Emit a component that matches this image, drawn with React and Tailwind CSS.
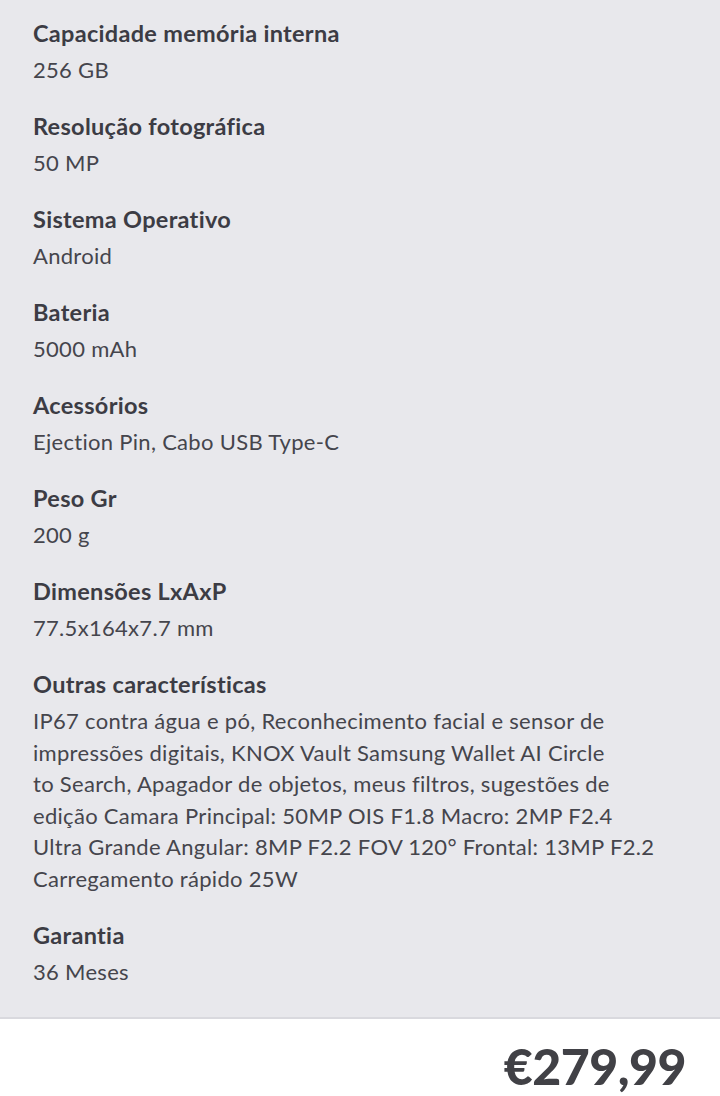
// Product spec sheet — grey list of label/value pairs with a white price footer.
const specs = [
  { label: "Capacidade memória interna", value: "256 GB" },
  { label: "Resolução fotográfica", value: "50 MP" },
  { label: "Sistema Operativo", value: "Android" },
  { label: "Bateria", value: "5000 mAh" },
  { label: "Acessórios", value: "Ejection Pin, Cabo USB Type-C" },
  { label: "Peso Gr", value: "200 g" },
  { label: "Dimensões LxAxP", value: "77.5x164x7.7 mm" },
  {
    label: "Outras características",
    lines: [
      "IP67 contra água e pó, Reconhecimento facial e sensor de",
      "impressões digitais, KNOX Vault Samsung Wallet AI Circle",
      "to Search, Apagador de objetos, meus filtros, sugestões de",
      "edição Camara Principal: 50MP OIS F1.8 Macro: 2MP F2.4",
      "Ultra Grande Angular: 8MP F2.2 FOV 120° Frontal: 13MP F2.2",
      "Carregamento rápido 25W",
    ],
  },
  { label: "Garantia", value: "36 Meses" },
];

function SpecItem({ label, value, lines }) {
  return (
    <div className="flex flex-col gap-[5px]">
      <h4 className="text-[23.5px] leading-[32px] font-bold tracking-[0.3px] text-[#3c3c44]">
        {label}
      </h4>
      {lines ? (
        <p className="text-[22px] leading-[31.6px] tracking-[0.3px] text-[#45454c]">
          {lines.map((line, i) => (
            <span key={i} className="block whitespace-nowrap">
              {line}
            </span>
          ))}
        </p>
      ) : (
        <p className="text-[22px] leading-[32px] tracking-[0.3px] text-[#45454c]">{value}</p>
      )}
    </div>
  );
}

export default function App() {
  return (
    <div
      className="w-[720px] h-[1096px] flex flex-col bg-white overflow-hidden"
      style={{ fontFamily: "Lato, 'Noto Sans', sans-serif" }}
    >
      <section className="flex flex-col gap-[24px] bg-[#e8e8ec] px-[33px] pt-[17px] pb-[29px] border-b-2 border-[#d9d9de]">
        {specs.map((s) => (
          <SpecItem key={s.label} {...s} />
        ))}
      </section>

      <footer className="flex justify-end px-[34px] pt-[14px]">
        <span className="text-[50px] leading-[66px] font-black text-[#414146] tracking-[-0.5px]">
          €279,99
        </span>
      </footer>
    </div>
  );
}
